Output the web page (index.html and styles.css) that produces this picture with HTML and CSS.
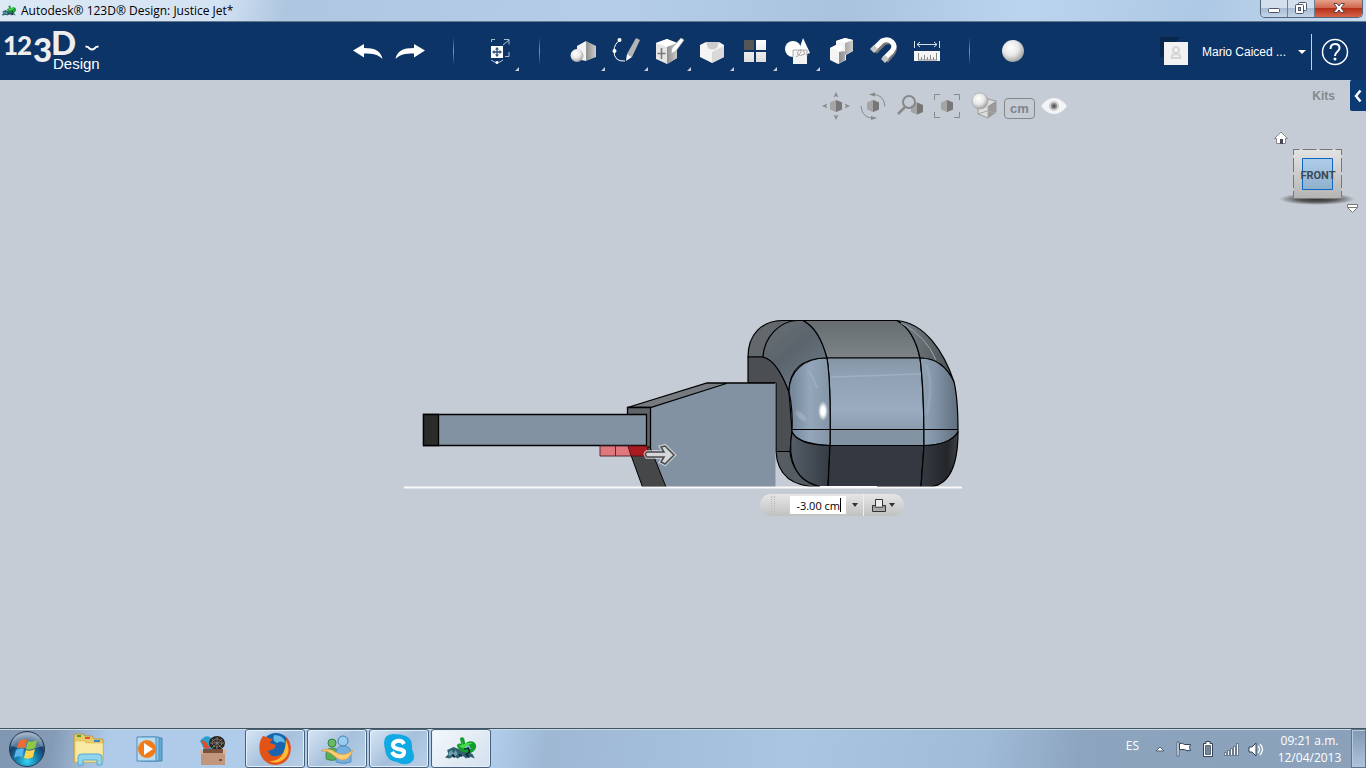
FILE: index.html
```html
<!DOCTYPE html>
<html lang="en">
<head>
<meta charset="utf-8">
<title>Autodesk® 123D® Design: Justice Jet*</title>
<link rel="stylesheet" href="styles.css">
</head>
<body>
<svg class="defs" width="0" height="0" aria-hidden="true">
  <defs>
    <radialGradient id="ball" cx=".4" cy=".35" r=".7"><stop offset="0" stop-color="#fff"/><stop offset=".5" stop-color="#e8e8e8"/><stop offset="1" stop-color="#999"/></radialGradient>
    <linearGradient id="side"><stop offset="0" stop-color="#8e8e8e"/><stop offset="1" stop-color="#ccc"/></linearGradient>
    <linearGradient id="pale" x2="0" y2="1"><stop offset="0" stop-color="#fff"/><stop offset="1" stop-color="#ddd"/></linearGradient>
    <symbol id="minicube" viewBox="0 0 12 12"><path d="M6 0l6 2.500v7L6 12 0 9.500v-7z" fill="#a5a5a5"/><path d="M6 0l6 2.500v7L6 12z" fill="#777"/></symbol>
    <symbol id="frog" viewBox="0 0 32 26">
      <path d="M1 21l3-3-1-4 6-3 5 2 6 1 7 4 2 4-5-2-3 2-4-3-4 3-4-2-4 2z" fill="#2f6170"/>
      <path d="M4 17l3-3 2 3 2-3 2 4-4 3-1-3-3 2z" fill="#6ea0b2"/>
      <path d="M12 10q1-3 4-2l-1-5q2-2 4 0l1 5q4-4 9-1 3 4-1 8-4 3-8 1-5 0-8-6z" fill="#159d2b"/>
      <path d="M16 4l2 5q5-3 9-1-4 0-7 4-3 1-6-2l3-1z" fill="#45dc4a"/>
      <path d="M19 13l4-1 1 4-3 2 3 3M8 18l2 3M14 18l3 2" stroke="#0a2630" stroke-width="1.500" fill="none"/>
      <path d="M20 12l3-2 2 3" stroke="#8fc7f5" fill="none"/>
    </symbol>
  </defs>
</svg>

<header class="titlebar">
  <svg class="titlebar-icon" viewBox="0 0 32 26"><use href="#frog"/></svg>
  <h1 class="titlebar-text">Autodesk® 123D® Design: Justice Jet*</h1>
  <div class="window-controls">
    <button class="win-btn" aria-label="Minimize"><svg width="14" height="16" viewBox="0 0 14 16"><rect x="1.500" y="7.500" width="11" height="4" rx="1" fill="#fff" stroke="#4b5669"/></svg></button>
    <button class="win-btn" aria-label="Restore"><svg width="14" height="16" viewBox="0 0 14 16"><g fill="#fff" stroke="#4b5669"><rect x="4.500" y="1.500" width="8" height="8" rx="1"/><rect x="1.500" y="3.500" width="8" height="9" rx="1"/><rect x="4.500" y="6.500" width="2" height="3" fill="#9fb3cc"/></g></svg></button>
    <button class="win-btn win-close" aria-label="Close"><svg width="14" height="16" viewBox="0 0 14 16"><path d="M2 2.500h3l2 2.500 2-2.500h3.500L9 7l3.500 4.500H9L7 9l-2 2.500H1.500L5 7z" fill="#fff" stroke="#5d4450"/></svg></button>
  </div>
</header>

<nav class="navbar">
  <button class="brand" aria-label="123D Design menu">
    <svg class="brand-logo" width="104" height="59" viewBox="0 0 104 59">
      <g class="brand-digits"><text class="brand-small" x="3" y="33">1</text><text class="brand-small" x="17" y="33">2</text><text class="brand-three" x="33" y="40">3</text><text class="brand-d" x="51" y="33">D</text></g>
      <text class="brand-name" x="53" y="47">Design</text>
      <path d="M85.500 24.500q3 0 4 2 2.500 2 5 0 1-2 4-2" fill="none" stroke="#fff" stroke-width="2"/>
    </svg>
  </button>

  <div class="tools">
    <button class="tool" aria-label="Undo"><svg class="tool-icon" viewBox="0 0 32 32"><path d="M1 15.500L12 9v4c11 0 17 3 18.500 11C26 19.500 21 18.500 12 18.500v4z" fill="#fff"/></svg></button>
    <button class="tool" aria-label="Redo"><svg class="tool-icon" viewBox="0 0 32 32"><path d="M30 15.500L19 9v4C8 13 2 16 .500 24 5 19.500 10 18.500 19 18.500v4z" fill="#fff"/></svg></button>
    <span class="divider"></span>
    <button class="tool has-menu" aria-label="Transform"><svg class="tool-icon" viewBox="0 0 32 32"><path d="M10.500 7V4.500H14M23 4.500h5v5M28 17v4.500h-4M22 10l6-5" fill="none" stroke="#aebfd3"/><path d="M10 11h12v12H10z" fill="#fff"/><path d="M16 13v8M12 17h8" stroke="#294c73" stroke-width="1.300"/><path d="M16 12l2 2.500h-4zM16 22l2-2.500h-4zM11 17l2.500-2v4zM21 17l-2.500-2v4z" fill="#294c73"/><path d="M10 25q6 5 12 0" fill="none" stroke="#aebfd3"/><circle cx="16" cy="27.500" r="1.500" fill="#fff"/></svg></button>
    <span class="divider"></span>
    <button class="tool has-menu" aria-label="Primitives"><svg class="tool-icon" viewBox="0 0 32 32"><path d="M10 11l9-5v20l-9-2z" fill="#f4f4f4"/><path d="M19 6l10 5v11l-10 4z" fill="url(#side)"/><circle cx="10" cy="20.500" r="6.500" fill="url(#ball)"/></svg></button>
    <button class="tool has-menu" aria-label="Sketch"><svg class="tool-icon" viewBox="0 0 32 32"><path d="M10 5Q4 9 4 16q0 11 11 10" fill="none" stroke="#fff"/><circle cx="9.500" cy="5" r="2" fill="#fff"/><circle cx="4.500" cy="16" r="2" fill="#fff"/><path d="M26 3l4 2-8 17-5-3z" fill="#b5b5b5"/><path d="M17 19l5 3-6 4z" fill="#fff"/></svg></button>
    <button class="tool has-menu" aria-label="Construct"><svg class="tool-icon" viewBox="0 0 32 32"><path d="M3 8l11-4 10 4v15l-10 6-11-5z" fill="#e5e5e5"/><path d="M3 8l11-4 10 4-10 4z" fill="#fff"/><path d="M14 12l10-4v15l-10 6z" fill="url(#side)"/><path d="M8.500 13v11M4.500 18.500h8" stroke="#777" stroke-width="1.500"/><path d="M28 3l3 2-8 11-5 3 1-6z" fill="#fff" stroke="#a0a0a0" stroke-width=".7"/></svg></button>
    <button class="tool has-menu" aria-label="Modify"><svg class="tool-icon" viewBox="0 0 32 32"><path d="M4 10l6-3h13l5 3v12l-12 6-12-6z" fill="#f4f4f4"/><path d="M16 17l12-6v11l-12 6z" fill="#d9d9d9"/><path d="M10 7h13l-2 6q-5 3-9 0z" fill="#ccc"/></svg></button>
    <button class="tool has-menu" aria-label="Pattern"><svg class="tool-icon" viewBox="0 0 32 32"><path fill="#555" d="M5 5h10v10H5z"/><path fill="url(#pale)" d="M17 5h10v10H17zM5 17h10v10H5zM17 17h10v10H17z"/></svg></button>
    <button class="tool has-menu" aria-label="Grouping"><svg class="tool-icon" viewBox="0 0 32 32"><circle cx="11" cy="14" r="8" fill="#fff"/><path d="M21 3l7 15q-7 3-12 0z" fill="#fff"/><path d="M11 15h14v14H11z" fill="#f4f4f4"/><path d="M11 22v-7h14v6M19 14q0 6-5 8M17 15l-2 4q3 3 8 0l-2-4" fill="none" stroke="#999" stroke-width=".8"/></svg></button>
    <button class="tool" aria-label="Combine"><svg class="tool-icon" viewBox="0 0 32 32"><path d="M5 13l6-3V6l9-3 8 2v11l-7 4v5l-8 4-8-4z" fill="#f4f4f4"/><path d="M11 6l9-3 8 2-7 3zM5 13l6-3 8 2-5 4z" fill="#fff"/><path d="M20 8l8-3v11l-8 4zM14 17l6-1v9l-6 4z" fill="url(#side)"/></svg></button>
    <button class="tool" aria-label="Snap"><svg class="tool-icon" viewBox="0 0 32 32"><path d="M6 16l9-9q6-3 9 1t0 9l-7 8" transform="translate(1 1)" fill="none" stroke="#777" stroke-width="5"/><path d="M5 15l9-9q6-3 10 1t0 9l-8 8" fill="none" stroke="#fff" stroke-width="5"/><path d="M2 14l4-4 4 4-4 4zM13 24l4-4 4 4-4 4z" fill="#c8c8c8"/></svg></button>
    <button class="tool" aria-label="Measure"><svg class="tool-icon" viewBox="0 0 32 32"><path d="M3.500 6v7M28.500 6v7M6 9.500h20M9 7L6 9.500 9 12M23 7l3 2.500-3 2.500" fill="none" stroke="#d6e1ec"/><path fill="#f5f5f5" d="M3 16h26v10H3z"/><path d="M7.500 18v7M10.500 22v3M13.500 20v5M16.500 22v3M19.500 20v5M22.500 22v3M25.500 18v7M7 25h19" stroke="#888"/></svg></button>
    <span class="divider"></span>
    <button class="tool" aria-label="Material"><svg class="tool-icon" viewBox="0 0 32 32"><circle cx="16" cy="16" r="11" fill="url(#ball)"/></svg></button>
  </div>

  <div class="account">
    <svg class="avatar" viewBox="0 0 30 30"><path d="M0 2h20L2 22H0z" fill="#07284c"/><path d="M4 7h24v23H4z" fill="#f2f2f2"/><circle cx="16" cy="15" r="3" fill="none" stroke="#d6d6d6" stroke-width="2"/><path d="M11.500 23q0-4 4.500-4t4.500 4z" fill="#eee" stroke="#d6d6d6" stroke-width="2"/></svg>
    <button class="account-name">Mario Caiced ...<svg width="8" height="4" viewBox="0 0 8 4"><path d="M0 0h8L4 4z" fill="#fff"/></svg></button>
    <button class="help" aria-label="Help"><svg width="28" height="28" viewBox="0 0 28 28"><circle cx="14" cy="14" r="12.500" fill="none" stroke="#fff" stroke-width="1.500"/><path d="M9.500 11q0-5 4.500-5t4.500 4q0 2-2 3.500-2.500 2-2.500 4.500" fill="none" stroke="#fff" stroke-width="2"/><circle cx="14" cy="21" r="1.500" fill="#fff"/></svg></button>
  </div>
</nav>

<main class="canvas">
  <svg class="scene" width="570" height="190" viewBox="400 310 570 190" role="img" aria-label="Jet model, front view">
    <defs>
      <linearGradient id="topGray" x2="0" y2="1"><stop offset="0" stop-color="#666c70"/><stop offset="1" stop-color="#7d8488"/></linearGradient>
      <linearGradient id="leftShell" x2=".7" y2="1"><stop offset="0" stop-color="#6b7073"/><stop offset=".5" stop-color="#5b646d"/><stop offset="1" stop-color="#6d7a88"/></linearGradient>
      <linearGradient id="glass" x2="0" y2="1"><stop offset="0" stop-color="#8595a6"/><stop offset=".2" stop-color="#90a1b4"/><stop offset=".6" stop-color="#9babc0"/><stop offset=".82" stop-color="#8b9caf"/><stop offset=".83" stop-color="#8293a4"/><stop offset="1" stop-color="#8293a4"/></linearGradient>
      <linearGradient id="glassLeft"><stop offset="0" stop-color="#718296"/><stop offset=".5" stop-color="#94a6b9"/><stop offset="1" stop-color="#8495a8"/></linearGradient>
      <linearGradient id="glassRight"><stop offset="0" stop-color="#91a3b5"/><stop offset=".35" stop-color="#8496a9"/><stop offset="1" stop-color="#606f7e"/></linearGradient>
      <linearGradient id="underLeft"><stop offset="0" stop-color="#555e69"/><stop offset="1" stop-color="#353b43"/></linearGradient>
      <linearGradient id="underRight"><stop offset="0" stop-color="#353a42"/><stop offset=".7" stop-color="#242629"/><stop offset="1" stop-color="#3c4044"/></linearGradient>
      <linearGradient id="rightShell"><stop offset="0" stop-color="#798388"/><stop offset="1" stop-color="#4c5155"/></linearGradient>
      <radialGradient id="shine"><stop offset="0" stop-color="#fff"/><stop offset=".4" stop-color="#fff"/><stop offset="1" stop-color="#fff" stop-opacity="0"/></radialGradient>
    </defs>
    <g stroke="#000" stroke-width="1.200" stroke-linejoin="round">
      <path d="M748 357C748 334 762 320.500 783 320.500H807L789 392Q775 357 763 357z" fill="#62686c"/>
      <path d="M748 357H763Q777 360 789 392L792 430 790 451.500H776V383H748z" fill="#4b4e53"/>
      <path d="M776 451.500H790Q792 478 823 487H820Q778 487 776 451.500z" fill="#555c62"/>
      <path d="M763 357C764 337 780 321 797 320.500H803Q820 330 827 358C802 358 789 370 789 392Q777 360 763 357z" fill="url(#leftShell)"/>
      <path d="M803 320.500H897Q914 330 920 358H827Q819 328 803 320.500z" fill="url(#topGray)"/>
      <path d="M897 320.500C925 323 944 352 954 382 947 367 937 358 920 358Q914 330 897 320.500z" fill="url(#rightShell)"/>
      <path d="M827 358H920Q924 390 924 445.500H830Q831 383 827 358z" fill="url(#glass)"/>
      <path d="M789 392C789 371 804 358 827 358Q831 383 830 445.500Q798 444 792 432 793 409 789 392z" fill="url(#glassLeft)"/>
      <path d="M920 358C937 358 947 367 954 382Q958 398 958 432 950 445 924 445.500 924 388 920 358z" fill="url(#glassRight)"/>
      <path d="M792 432Q798 445 830 445.500L828 487H823C795 483 787 459 792 432z" fill="url(#underLeft)"/>
      <path d="M830 445.500H924L921 487H828z" fill="#343840"/>
      <path d="M924 445.500Q950 445 958 432C958 463 951 487 927 487H921z" fill="url(#underRight)"/>
      <path d="M792 429.500H958" fill="none"/>
    </g>
    <path d="M831 377L921 374M807 370Q812 374 817 388" fill="none" stroke="#aab9c9" stroke-width="1.500" opacity=".6"/>
    <path d="M926 365Q934 383 927 414" fill="none" stroke="#aab9c9" stroke-width="3" opacity=".3"/>
    <path d="M901 323Q926 336 936 360" fill="none" stroke="#99a4aa" stroke-width="1"/>
    <ellipse cx="823" cy="411" rx="5" ry="10" fill="url(#shine)"/>
    <ellipse cx="801" cy="416" rx="9" ry="4" fill="url(#shine)" opacity=".2" transform="rotate(45 801 416)"/>
    <path d="M650.500 407.500L728 383H775.500V487H666L650 448z" fill="#8292a2"/>
    <path d="M775.500 451V487H812Q779 484 775.500 451z" fill="#59616a" opacity=".0"/>
    <path d="M627.500 407.500L707 383H728L650.500 407.500z" fill="#767b80" stroke="#000" stroke-width="1.300"/>
    <path d="M728 383H775.500" stroke="#000" stroke-width="1.500"/>
    <path d="M775.500 383V451" stroke="#59636d"/>
    <path d="M627.500 407.500H650.500V448H627.500z" fill="#606367" stroke="#000" stroke-width="1.300"/>
    <path d="M628 447H650L666 487H642.500z" fill="#454749" stroke="#000"/>
    <path d="M423.500 414.500H646.500V445.500H423.500z" fill="#8292a2" stroke="#000" stroke-width="1.300"/>
    <path d="M423.500 414.500H438.500V445.500H423.500z" fill="#2b2b2a" stroke="#000" stroke-width="1.300"/>
    <path d="M600 446H631V456H600z" fill="#e0777d" stroke="#532c32"/>
    <path d="M615.500 446V456" stroke="#532c32"/>
    <path d="M628 446H647L649 456H631z" fill="#a91b22" stroke="#5a1015"/>
    <path d="M404 487.500H962" stroke="#fafafa" stroke-width="2"/>
    <path d="M820 486.500H877" stroke="#fff" stroke-width="1"/>
    <path d="M647 452h17l-3-5 4-1 9 9-9 9-4-2 3-5h-17q-3-3 0-5z" fill="#d5d7d9" stroke="#f0f0f0" stroke-width="4" opacity=".6"/>
    <path d="M647 452h17l-3-5 4-1 9 9-9 9-4-2 3-5h-17q-3-3 0-5z" fill="#d5d7d9" stroke="#484b4e" stroke-width="1.500"/>
  </svg>

  <form class="dimension">
    <span class="dimension-grip"></span>
    <label class="dimension-field"><input class="dimension-input" type="text" value="-3.00 cm" aria-label="Distance"><span class="dimension-caret"></span></label>
    <button class="dimension-drop" type="button" aria-label="Units"><svg width="6" height="4" viewBox="0 0 6 4"><path d="M0 0h6L3 4z" fill="#333"/></svg></button>
    <button class="dimension-mode" type="button" aria-label="Operation"><svg width="14" height="15" viewBox="0 0 14 15"><path d="M.500 7.500h13v6H.500z" fill="#aaa" stroke="#333"/><path d="M3.500 1.500h7v8h-7z" fill="#eee" stroke="#333"/><path d="M1 8h12v2H1z" fill="#888" opacity=".5"/></svg><svg width="6" height="4" viewBox="0 0 6 4"><path d="M0 0h6L3 4z" fill="#333"/></svg></button>
  </form>

  <div class="viewbar">
    <button class="view-tool" aria-label="Pan"><svg class="view-icon" viewBox="0 0 28 28"><use href="#minicube" x="8" y="8" width="12" height="12"/><path d="M14 0l2.500 5.500L14 4l-2.500 1.500zM14 28l2.500-5.500L14 24l-2.500-1.500zM0 14l5.500-2.500L4 14l1.500 2.500zM28 14l-5.500-2.500L24 14l-1.500 2.500z" fill="#888"/></svg></button>
    <button class="view-tool" aria-label="Orbit"><svg class="view-icon" viewBox="0 0 28 28"><use href="#minicube" x="8" y="8" width="12" height="12"/><path d="M12 2.500q13-1 14 12M16 26Q3 27 2 14" fill="none" stroke="#888"/><path d="M10 2.500L16 .500v4zM18 26l-6-2v4z" fill="#888"/></svg></button>
    <button class="view-tool" aria-label="Zoom"><svg class="view-icon" viewBox="0 0 28 28"><use href="#minicube" x="15" y="10" width="12" height="13"/><circle cx="13" cy="10" r="6" fill="#c5ccd6" fill-opacity=".7" stroke="#888" stroke-width="2"/><path d="M9 15l-7 7" stroke="#888" stroke-width="2.500"/></svg></button>
    <button class="view-tool" aria-label="Fit"><svg class="view-icon" viewBox="0 0 28 28"><use href="#minicube" x="8" y="8" width="12" height="12"/><path d="M1.500 8V2.500H7M21 2.500h5.500V8M26.500 20v5.500H21M7 25.500H1.500V20" fill="none" stroke="#888"/></svg></button>
    <button class="view-tool" aria-label="Display style"><svg class="view-icon" viewBox="0 0 28 28"><path d="M8 11l9-4 9 2v11l-8 6-10-4z" fill="#ddd" stroke="#999"/><path d="M18 14l8-5v11l-8 6z" fill="#999"/><path d="M18 14v12M8 22l9-3 9 2" stroke="#aaa" fill="none"/><circle cx="10" cy="9" r="8" fill="url(#ball)" stroke="#999" stroke-width=".5"/></svg></button>
    <button class="unit-tool">cm</button>
    <button class="view-tool" aria-label="Visibility"><svg class="view-icon" viewBox="0 0 28 28"><path d="M1 14Q7 6 14 6t13 8q-6 8-13 8T1 14z" fill="#f3f4f6"/><circle cx="14" cy="14" r="4" fill="#888" stroke="#ccc" stroke-width="2"/><circle cx="14" cy="14" r="1.500" fill="#555"/></svg></button>
  </div>

  <aside class="sidebar">
    <div class="kits"><span>Kits</span><button class="kits-tab" aria-label="Open kits"><svg width="8" height="14" viewBox="0 0 8 14"><path d="M6.500 1.500L2 7l4.500 5.500" fill="none" stroke="#fff" stroke-width="2.500"/></svg></button></div>
    <svg class="viewcube" width="90" height="92" viewBox="1276 125 90 92" role="img" aria-label="View cube">
      <defs><linearGradient id="cubeFace" x2="0" y2="1"><stop offset="0" stop-color="#e3e3e3"/><stop offset="1" stop-color="#b4b4b4"/></linearGradient><linearGradient id="cubeGlass" x2="0" y2="1"><stop offset="0" stop-color="#aecdea"/><stop offset="1" stop-color="#8fb0ca"/></linearGradient><radialGradient id="shadow"><stop offset="0" stop-color="#333"/><stop offset=".5" stop-color="#555"/><stop offset="1" stop-color="#555" stop-opacity="0"/></radialGradient></defs>
      <ellipse cx="1317" cy="199" rx="38" ry="6" fill="url(#shadow)"/>
      <path d="M1293.500 149.500H1341.500V198.500H1293.500z" fill="url(#cubeFace)"/>
      <path d="M1293.500 149.500H1341.500M1293.500 198.500H1341.500" stroke="#777" stroke-dasharray="6 3 14 3 13 3"/>
      <path d="M1293.500 149V199M1341.500 149V199" stroke="#777" stroke-dasharray="6 3 14 3 13 3"/>
      <path d="M1302.500 158.500H1332.500V189.500H1302.500z" fill="url(#cubeGlass)" stroke="#0b67c2"/>
      <text class="cube-label" x="1318" y="179" text-anchor="middle">FRONT</text>
      <path d="M1274.500 138.500l6.500-6.500 6.500 6.500h-2v5h-9v-5z" fill="#fff" stroke="#888"/><path d="M1280 139h3v5h-3z" fill="#444a55"/>
      <path d="M1347.500 204.500H1357.500V207.500L1352.500 212.500 1347.500 207.500zM1348 207.500h9" fill="#fff" stroke="#777"/>
    </svg>
  </aside>
</main>

<footer class="taskbar">
  <button class="start" aria-label="Start"><svg width="38" height="38" viewBox="0 0 38 38"><defs><radialGradient id="orb" cx=".5" cy=".85" r=".8"><stop offset="0" stop-color="#36d3f3"/><stop offset=".4" stop-color="#157ba8"/><stop offset=".7" stop-color="#164069"/><stop offset="1" stop-color="#8c9fb4"/></radialGradient></defs><circle cx="19" cy="19" r="17.500" fill="url(#orb)" stroke="#233b55"/><path d="M3 16Q5 3 19 3t16 13q-14 5-32 0z" fill="#d5e2ed" opacity=".35"/><path d="M11 11q5-3 8-1l-2 8q-4-2-8 1z" fill="#f06b32"/><path d="M20 11q4 2 9-1l-2 8q-5 3-9 1z" fill="#8fc841"/><path d="M8 20q5-3 8-1l-2 8q-4-2-8 1z" fill="#59b5ed"/><path d="M18 20q4 2 9-1l-2 8q-5 3-9 1z" fill="#ffd34b"/></svg></button>
  <button class="task" aria-label="Explorer"><svg class="task-icon" viewBox="0 0 34 34"><path d="M2 4q0-2 2-2h7l2 2h7l2 3h9v23H2z" fill="#e8ca67" stroke="#bb9c45"/><path d="M5 3h4v2H5z" fill="#3ba43c"/><path d="M13 5h5v2h-5z" fill="#dc5137"/><path d="M22 8h6v2h-6z" fill="#3887c7"/><path d="M3 9h9l2 2h17v19H3z" fill="#f8eaa4" stroke="#d9bd66" stroke-width=".7"/><path d="M6 33v-8q0-3 4-3h16q4 0 4 3v8h-5v-5H11v5z" fill="#91d4ed" stroke="#53a8cc"/></svg></button>
  <button class="task" aria-label="Media Player"><svg class="task-icon" viewBox="0 0 34 34"><path d="M12 6h16v23H12z" fill="#67a8d4" stroke="#4787b5"/><path d="M7 5h18v24H7z" fill="#8cc4e5" stroke="#4e8eba"/><path d="M3 5h19v24H3z" fill="#b9dcf0" stroke="#4e8eba"/><circle cx="13" cy="17" r="9" fill="#f17b18"/><path d="M10 11l9 6-9 6z" fill="#fff"/></svg></button>
  <button class="task" aria-label="Games"><svg class="task-icon" viewBox="0 0 34 34"><path d="M4 9q8-10 14 1l-2 9H9z" fill="#2ca0ca"/><path d="M5 8l5 2 4 6-5 1z" fill="#e34c27"/><ellipse cx="21" cy="11" rx="8" ry="7" fill="#292622"/><ellipse cx="21" cy="11" rx="5" ry="4" fill="none" stroke="#9c9184" stroke-dasharray="2 1"/><path d="M14 11h14M21 5v13M16 7l10 9M26 7l-10 9" stroke="#9c9184" stroke-width=".7"/><path d="M7 17h20v5H7z" fill="#77513b"/><path d="M5 21h24v12H5z" fill="#c2967a"/><path d="M3 19l3-2 1 5H4zM31 19l-3-2-1 5h3z" fill="#dbb59a"/><path d="M23 27h3v2h-3z" fill="#76513f"/></svg></button>
  <button class="task is-open" aria-label="Firefox"><svg class="task-icon" viewBox="0 0 34 34"><circle cx="18" cy="15" r="14" fill="#1764b1"/><path d="M16 3q10 0 11 8-5-3-8 0-5-2-3-8z" fill="#65bae8"/><path d="M5 4q-5 6-3 17 4 12 16 12 14-1 15-17-1-8-5-11 2 14-6 18-9 4-12-4l6-2 2-4-6-2q1-3 3-4-4 0-6-2z" fill="#e25318"/><path d="M28 8q7 15-5 21-5 3-12 0 16 1 17-21z" fill="#ffba36"/></svg></button>
  <button class="task is-open" aria-label="Messenger"><svg class="task-icon" viewBox="0 0 34 34"><circle cx="12" cy="11" r="4" fill="#6cba67" stroke="#2f8438"/><path d="M6 27v-6q1-5 6-5 6 0 6 5v6q-6 3-12 0z" fill="#58ab58" stroke="#2f8438" stroke-width=".7"/><circle cx="23" cy="9" r="5" fill="#9bcbf0" stroke="#3f80b5"/><path d="M16 30V20q1-6 7-6 8 0 8 7v9q-7 3-15 0z" fill="#75afe0" stroke="#3f80b5" stroke-width=".7"/><path d="M1 19q8-4 14 1 9 6 18-2-4 11-12 10-5-2-9-6-5-4-11-3z" fill="#ffcd74" stroke="#e29b37" stroke-width=".7"/></svg></button>
  <button class="task is-open" aria-label="Skype"><svg class="task-icon" viewBox="0 0 34 34"><path d="M11 2q8 0 13 2 7 3 6 13 6 13-5 15-5 1-10-2-11-1-12-13Q-1 3 11 2z" fill="#10a9e3"/><path d="M22 12q-2-4-7-3-4 1-4 4 0 3 5 4 7 1 6 4-1 4-6 3-4 0-6-4" fill="none" stroke="#fff" stroke-width="4"/></svg></button>
  <button class="task is-open is-active" aria-label="123D Design"><svg class="task-icon" viewBox="0 0 32 26"><use href="#frog"/></svg></button>

  <div class="tray">
    <span class="tray-lang">ES</span>
    <button class="tray-btn" aria-label="Hidden icons"><svg width="10" height="6" viewBox="0 0 10 6"><path d="M1 5l4-4 4 4z" fill="#fff" stroke="#4e6176"/></svg></button>
    <button class="tray-btn" aria-label="Action center"><svg width="18" height="18" viewBox="0 0 18 18"><path d="M2 2h2v14H2z" fill="#fff" stroke="#334354" stroke-width=".7"/><path d="M4.500 3.500q3-1 5 1h6l-1 3 1 3q-4 1-6-1h-5z" fill="#fff" stroke="#334354"/></svg></button>
    <button class="tray-btn" aria-label="Battery"><svg width="18" height="18" viewBox="0 0 18 18"><path d="M7 1.500h4v2h2.500v13h-9v-13H7z" fill="#fff" stroke="#334354"/><path d="M6.500 5.500h5v9h-5z" fill="#73869b" stroke="#334354" stroke-width=".7"/></svg></button>
    <button class="tray-btn" aria-label="Network"><svg width="18" height="18" viewBox="0 0 18 18"><path d="M1.500 12.500h2v3h-2zM4.500 10.500h2v5h-2zM7.500 8.500h2v7h-2zM10.500 6.500h2v9h-2zM13.500 3.500h2v12h-2z" fill="#fff" stroke="#425367" stroke-width=".7"/></svg></button>
    <button class="tray-btn" aria-label="Volume"><svg width="18" height="18" viewBox="0 0 18 18"><path d="M2 7h3l4-4v13l-4-4H2z" fill="#fff" stroke="#334354"/><path d="M11 6q3 3 0 7M13 4q5 5 0 11" fill="none" stroke="#fff" stroke-width="1.300"/></svg></button>
    <time class="clock"><span>09:21 a.m.</span><span>12/04/2013</span></time>
    <button class="show-desktop" aria-label="Show desktop"></button>
  </div>
</footer>
</body>
</html>
```
FILE: styles.css
```css
* { box-sizing: border-box; }

body {
  margin: 0;
  min-height: 100vh;
  display: flex;
  flex-direction: column;
  overflow: hidden;
  background: #c5ccd6;
  font-family: "Open Sans", "Noto Sans", sans-serif;
  font-size: 12px;
}

button {
  margin: 0;
  padding: 0;
  border: 0;
  background: none;
  color: inherit;
  font: inherit;
  display: flex;
  align-items: center;
  justify-content: center;
}

svg { display: block; flex: none; }
.defs { position: absolute; }

/* Title bar */
.titlebar {
  height: 22px;
  display: flex;
  align-items: center;
  gap: 4px;
  padding-left: 1px;
  background: linear-gradient(100deg, #dce8f5 0%, #d3e2f2 16%, #aec6e0 21%, #b5cde8 45%, #a9c3df 62%, #bbd4ee 75%, #adc8e4 88%, #c7dcf1 100%);
  border-bottom: 1px solid #66788e;
}
.titlebar-icon { width: 16px; height: 14px; }
.titlebar-text { flex: 1; margin: 0; font-size: 12px; font-weight: 400; line-height: 20px; color: #000; }
.window-controls {
  align-self: flex-start;
  display: flex;
  height: 18px;
  margin-right: 3px;
  border: 1px solid #54657a;
  border-top: 0;
  border-radius: 0 0 5px 5px;
  overflow: hidden;
}
.win-btn { width: 27px; border-right: 1px solid #6c7e94; background: linear-gradient(#d2dfed 45%, #a8bcd3 50%, #c3d5e8); }
.win-close { width: 47px; border-right: 0; background: linear-gradient(#e5a18c, #d1674e 45%, #b63017 50%, #d5644b); }

/* Application bar */
.navbar {
  height: 58px;
  display: grid;
  grid-template-columns: 1fr auto 1fr;
  align-items: center;
  background: #0c3466;
  color: #fff;
  font-family: "Liberation Sans", Arial, sans-serif;
}
.brand { justify-self: start; }
.brand-logo { overflow: visible; }
.brand-digits { font-family: Lato, sans-serif; font-weight: 900; fill: #eee; }
.brand-small { font-size: 26px; }
.brand-three,
.brand-d { font-size: 33px; }
.brand-name { font-size: 15px; fill: #fff; }
.tools { display: flex; padding-left: 14px; }
.tool { position: relative; width: 43px; height: 58px; padding-bottom: 2px; }
.tool-icon { width: 32px; height: 32px; }
.has-menu::after {
  content: "";
  position: absolute;
  right: -1px;
  bottom: 10px;
  border: 2px solid;
  border-color: transparent #c9cdd3 #c9cdd3 transparent;
}
.divider {
  width: 1px;
  height: 28px;
  margin: 14px 21px;
  background: linear-gradient(transparent, #8693a6, transparent);
}
.account { justify-self: end; display: flex; align-items: center; padding-right: 17px; }
.avatar { width: 30px; height: 30px; margin-right: 12px; margin-bottom: 4px; }
.account-name { gap: 12px; font-size: 12px; padding-right: 5px; }
.help { height: 36px; padding-left: 9px; border-left: 1px solid #b4d8f0; }

/* Modelling canvas */
.canvas { position: relative; flex: 1; display: flex; justify-content: flex-end; align-items: flex-start; }
.scene { position: absolute; left: calc(50% - 283px); top: calc(50% - 94px); }
.viewbar { display: flex; align-items: center; margin-top: 12px; margin-right: 204px; }
.view-tool { width: 37px; height: 28px; }
.view-icon { width: 28px; height: 28px; }
.unit-tool {
  width: 31px;
  height: 21px;
  margin: 4px 0 0 2px;
  border: 1px solid #888;
  border-radius: 4px;
  color: #80848a;
  font: bold 13px "Liberation Sans", Arial, sans-serif;
}
.sidebar { width: 90px; }
.kits {
  display: flex;
  justify-content: flex-end;
  align-items: center;
  gap: 15px;
  color: #85888d;
  font: bold 12px "Liberation Sans", Arial, sans-serif;
}
.kits-tab { width: 16px; height: 31px; background: #0c3b74; border-radius: 2px 0 0 2px; }
.viewcube { margin-top: 14px; overflow: visible; }
.cube-label { font: bold 11px Roboto, sans-serif; fill: #3b4856; }

/* Distance entry floating beside the model */
.dimension {
  position: absolute;
  left: calc(50% + 77px);
  top: calc(50% + 90px);
  height: 22px;
  display: flex;
  align-items: center;
  border-radius: 11px;
  background: linear-gradient(#e6e6e6, #c1c1c1);
  overflow: hidden;
}
.dimension-grip { width: 4px; height: 18px; margin: 0 15px 0 11px; border: 1px dotted #bbb; border-width: 0 1px; }
.dimension-field { display: flex; align-items: center; height: 18px; width: 56px; padding-right: 5px; background: #fff; }
.dimension-input {
  flex: 1;
  min-width: 0;
  padding: 0;
  border: 0;
  outline: 0;
  background: none;
  font: 11px "Open Sans", sans-serif;
  text-align: right;
}
.dimension-caret { width: 1px; height: 14px; background: #000; }
.dimension-drop { width: 18px; height: 22px; border-right: 1px solid #eee; }
.dimension-mode { gap: 3px; width: 40px; padding-right: 2px; }

/* Taskbar */
.taskbar {
  height: 40px;
  display: flex;
  border-top: 1px solid #42545b;
  background: linear-gradient(100deg, #8197b1 0%, #859bb5 4%, #afcbe9 8%, #b0cdeb 36%, #9eb8d4 40%, #a9c5e2 58%, #9fbbd8 72%, #8da4be 79%, #8ba1ba 100%);
  box-shadow: inset 0 1px #c8daed;
}
.start { width: 54px; }
.task { width: 62px; }
.task-icon { width: 34px; height: 34px; }
.start + .task { margin-left: 4px; }
.is-open { width: 60px; margin: 0 1px; border: 1px solid #47617c; border-radius: 3px; background: linear-gradient(135deg, #d7e6f5, #a6c0dc 50%, #b8cfe6); box-shadow: inset 0 0 0 1px #e5effa; }
.is-active { background: linear-gradient(135deg, #f5f8fc, #d3e0ee); }
.tray { display: flex; align-items: center; margin-left: auto; color: #fff; }
.tray-lang { margin: 0 9px 6px 0; }
.tray-btn { width: 24px; height: 38px; }
.clock { display: flex; flex-direction: column; align-items: center; width: 83px; line-height: 17px; }
.show-desktop { width: 15px; height: 39px; border: 1px solid #60758c; background: linear-gradient(#8299b3, #adc4dc); box-shadow: inset 1px 1px #b8cadd; }
```
